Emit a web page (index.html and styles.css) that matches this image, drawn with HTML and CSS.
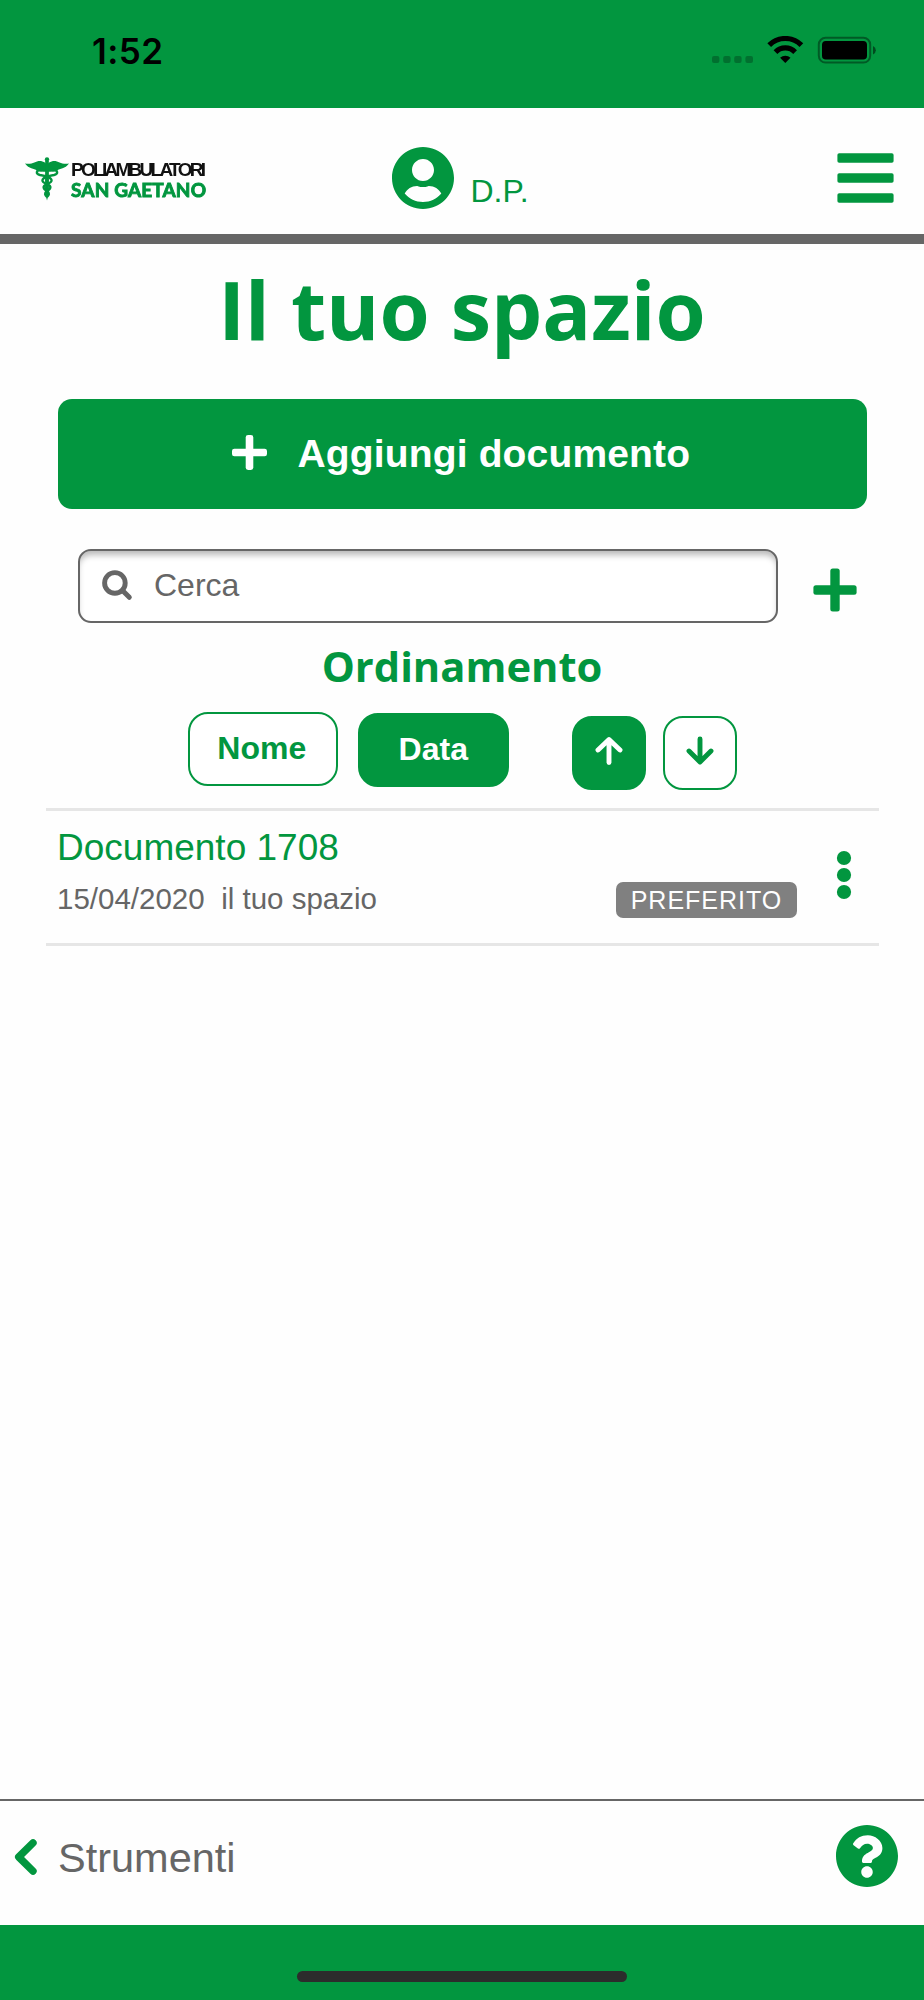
FILE: index.html
```html
<!DOCTYPE html>
<html lang="it">
<head>
<meta charset="utf-8">
<title>Il tuo spazio</title>
<link rel="stylesheet" href="styles.css">
</head>
<body>
<div class="app">
  <div class="status">
    <span class="time">1:52</span>
    <svg class="status-icons" width="166" height="30" viewBox="0 0 166 30">
      <g fill="#000" fill-opacity=".25"><rect x="0" y="20" width="7.4" height="7" rx="2"/><rect x="11.2" y="20" width="7.4" height="7" rx="2"/><rect x="22.2" y="20" width="7.4" height="7" rx="2"/><rect x="33.4" y="20" width="7.6" height="7" rx="2"/></g>
      <g fill="none" stroke="#000" stroke-width="5.200"><path d="M57.200 9.200A22.700 22.700 0 0 1 89.400 9.200"/><path d="M63.500 16.100A13.600 13.600 0 0 1 83.100 16.100"/></g>
      <path d="M73.300 27L68.100 21.800A7.400 7.400 0 0 1 78.500 21.800Z"/>
      <rect x="106.800" y="1.800" width="51.400" height="24.800" rx="6.800" fill="none" stroke="#000" stroke-opacity=".4" stroke-width="2"/>
      <rect x="110" y="5" width="45" height="18.600" rx="3.800"/>
      <path d="M161 10v8.600a4.700 4.700 0 0 0 0-8.600z" fill-opacity=".5"/>
    </svg>
  </div>
  <header class="header">
    <svg class="logo" width="190" height="50" viewBox="0 0 190 50">
      <g fill="#02963f">
        <circle cx="22" cy="2.500" r="2.200"/>
        <path d="M0 6.500C8 8 10 3.500 16 4Q20 4.500 22 7.500Q24 4.500 28 4C34 3.500 36 8 44 6.500C40 12 35 11.500 32 13.500Q27 15.500 22 14.500Q17 15.500 12 13.500C9 11.500 4 12 0 6.500Z"/>
        <path d="M20.200 4h3.600L24 36L22 43.500L20 36Z"/>
      </g>
      <g fill="none" stroke="#02963f" stroke-width="2.400"><path d="M17 13C10 13 11 17 15 18C29 20 29 25 22 27C17 29 18 32 22 34C25 36 24 38 22 40"/><path d="M27 13C34 13 33 17 29 18C15 20 15 25 22 27C27 29 26 32 22 34C19 36 20 38 22 40"/></g>
      <text class="logo-top" x="46" y="19" textLength="135" lengthAdjust="spacing">POLIAMBULATORI</text>
      <text class="logo-bottom" x="46" y="40" textLength="135" lengthAdjust="spacing">SAN GAETANO</text>
    </svg>
    <div class="user">
      <svg width="62" height="62" viewBox="0 8 496 496"><path fill="#02963f" d="M248 8C111 8 0 119 0 256s111 248 248 248 248-111 248-248S385 8 248 8zm0 96c48.600 0 88 39.400 88 88s-39.400 88-88 88-88-39.400-88-88 39.400-88 88-88zm0 344c-58.700 0-111.300-26.600-146.500-68.200 18.800-35.400 55.600-59.800 98.500-59.800 2.400 0 4.800.4 7.100 1.100 13 4.200 26.600 6.900 40.900 6.900 14.300 0 28-2.700 40.900-6.900 2.300-.7 4.700-1.100 7.100-1.100 42.900 0 79.700 24.400 98.500 59.800C359.300 421.400 306.700 448 248 448z"/></svg>
      <span class="initials">D.P.</span>
    </div>
    <svg class="burger" width="57" height="50" viewBox="0 0 57 50" fill="#02963f"><rect x=".4" y=".3" width="56.200" height="9.400" rx="1.800"/><rect x=".4" y="20.300" width="56.200" height="9.400" rx="1.800"/><rect x=".4" y="40.300" width="56.200" height="9.400" rx="1.800"/></svg>
  </header>
  <main class="main">
    <h1 class="title">Il tuo spazio</h1>
    <div class="add">
      <svg width="35" height="35" viewBox="0 0 35 35" fill="#fff"><rect x="0" y="13.700" width="35" height="7.600" rx="2.400"/><rect x="13.700" y="0" width="7.600" height="35" rx="2.400"/></svg>
      <span class="add-label">Aggiungi documento</span>
    </div>
    <div class="search-row">
      <div class="search">
        <svg width="31" height="31" viewBox="0 0 31 31" fill="none" stroke="#666"><circle cx="12.900" cy="12.900" r="10.300" stroke-width="4.900"/><path d="M20.500 20.500L27.300 27.300" stroke-width="5" stroke-linecap="round"/></svg>
        <span class="placeholder">Cerca</span>
      </div>
      <svg class="plus" width="44" height="44" viewBox="0 0 44 44" fill="#02963f"><rect x=".4" y="17.300" width="43.200" height="9.400" rx="2.500"/><rect x="17.300" y=".4" width="9.400" height="43.200" rx="2.500"/></svg>
    </div>
    <h2 class="sort-title">Ordinamento</h2>
    <div class="sort">
      <span class="chip chip-name">Nome</span>
      <span class="chip chip-date active">Data</span>
      <span class="arrow arrow-up active"><svg width="28" height="30" viewBox="0 0 28 30" fill="none" stroke="#fff" stroke-width="4.900"><path d="M14 4V26.500M3 14L14 3.500L25 14" stroke-linecap="round" stroke-linejoin="round"/></svg></span>
      <span class="arrow arrow-down"><svg width="28" height="30" viewBox="0 0 28 30" fill="none" stroke="#02963f" stroke-width="4.900"><path d="M14 25V3M3 15L14 26L25 15" stroke-linecap="round" stroke-linejoin="round"/></svg></span>
    </div>
    <div class="doc">
      <div class="doc-info">
        <div class="doc-name">Documento 1708</div>
        <div class="doc-meta"><span class="date">15/04/2020</span><span class="place">il tuo spazio</span></div>
      </div>
      <span class="badge">PREFERITO</span>
      <svg class="dots" width="16" height="50" viewBox="0 0 16 50" fill="#02963f"><circle cx="8" cy="8" r="7.100"/><circle cx="8" cy="25" r="7.100"/><circle cx="8" cy="42" r="7.100"/></svg>
    </div>
  </main>
  <footer class="footer">
    <svg class="back" width="24" height="38" viewBox="0 0 24 38" fill="none" stroke="#02963f" stroke-width="7.400"><path d="M19 4.900L4.700 19L19 33.100" stroke-linecap="round" stroke-linejoin="round"/></svg>
    <span class="tools">Strumenti</span>
    <svg class="help" width="62" height="62" viewBox="8 8 496 496"><path fill="#02963f" d="M504 256c0 136.997-111.043 248-248 248S8 392.997 8 256C8 119.083 119.043 8 256 8s248 111.083 248 248zM262.655 90c-54.497 0-89.255 22.957-116.549 63.758-3.536 5.286-2.353 12.415 2.715 16.258l34.699 26.310c5.205 3.947 12.621 3.008 16.665-2.122 17.864-22.658 30.113-35.797 57.303-35.797 20.429 0 45.698 13.148 45.698 32.958 0 14.976-12.363 22.667-32.534 33.976C247.128 238.528 216 254.941 216 296v4c0 6.627 5.373 12 12 12h56c6.627 0 12-5.373 12-12v-1.333c0-28.462 83.186-29.647 83.186-106.667 0-58.002-60.165-102-116.531-102zM256 338c-25.365 0-46 20.635-46 46 0 25.364 20.635 46 46 46s46-20.636 46-46c0-25.365-20.635-46-46-46z"/></svg>
  </footer>
  <div class="home"><div class="home-bar"></div></div>
</div>
</body>
</html>
```
FILE: styles.css
```css
* { box-sizing: border-box; }
body { margin: 0; background: #fefefe; font-family: "Liberation Sans", Arial, sans-serif; color: #666; }
svg { display: block; flex: none; }
.app { width: 924px; height: 2000px; display: flex; flex-direction: column; white-space: nowrap; overflow: hidden; }

.status { height: 108.4px; flex: none; background: #02963f; display: flex; align-items: flex-start; justify-content: space-between; padding: 35px 46px 0 92px; }
.status-icons { margin-top: 1px; }
.time { font: 600 35px/32px "Inter", sans-serif; color: #000; letter-spacing: 0.4px; }

.header { height: 135.6px; flex: none; border-bottom: 10px solid #666; display: flex; align-items: flex-start; background: #fefefe; }
.logo { margin: 48.500px 0 0 25px; filter: blur(0.5px); overflow: visible; }
.logo-top { font: 700 19px "Liberation Sans", sans-serif; fill: #111; }
.logo-bottom { font: 700 19px "Lato", sans-serif; fill: #02963f; stroke: #02963f; stroke-width: 0.9px; }
.user { display: flex; margin: 38.500px 0 0 177px; }
.initials { font-size: 32px; line-height: 32px; margin: 28px 0 0 16.500px; color: #02963f; }
.burger { margin: 44.500px 30px 0 auto; }

.main { flex: 1; display: flex; flex-direction: column; }
.title { margin: 15px 0 0; height: 100px; font: 700 81.100px/100px "Open Sans", sans-serif; color: #02963f; text-align: center; }
.add { margin: 40px 57.500px 0; height: 110.500px; border-radius: 14px; background: #02963f; display: flex; padding: 36px 0 0 174px; }
.add-label { font-size: 39px; font-weight: 700; line-height: 40px; margin: -1px 0 0 31px; color: #fff; letter-spacing: 0.15px; }
.search-row { display: flex; margin: 39.500px 0 0 78px; }
.search { width: 699.500px; height: 74px; border: 2.500px solid #666; border-radius: 13px; background: #fff; box-shadow: inset 0 6px 6px -2px rgba(0,0,0,.28); display: flex; padding: 19.500px 0 0 22px; }
.placeholder { font-size: 32px; line-height: 32px; margin: -1px 0 0 21px; }
.plus { margin: 19px 0 0 35px; }
.sort-title { margin: 13px 0 0; height: 60px; font: 700 41.700px/60px "Open Sans", sans-serif; color: #02963f; text-align: center; }
.sort { display: flex; height: 112px; padding: 16px 0 0 187.500px; color: #02963f; font-weight: 700; }
.chip { width: 150.500px; height: 74px; border: 2px solid #02963f; border-radius: 20px; font-size: 32px; line-height: 69px; text-align: center; background: #fff; }
.chip-name { padding-right: 2px; line-height: 68px; }
.chip-date { margin: 1px 0 0 20px; }
.arrow { width: 74px; height: 74px; border: 2px solid #02963f; border-radius: 20px; display: flex; justify-content: center; padding-top: 18px; margin-top: 4px; background: #fff; }
.arrow-up { margin-left: 63.500px; }
.arrow-down { margin-left: 17px; }
.active { background: #02963f; color: #fff; }
.doc { margin: 0 45.500px; height: 138px; border: solid #e6e6e6; border-width: 3px 0; display: flex; align-items: flex-start; }
.doc-info { width: 570.500px; padding: 17px 0 0 11.500px; }
.doc-name { font-size: 37px; line-height: 40px; color: #02963f; }
.doc-meta { font-size: 29.500px; line-height: 32px; margin-top: 15px; display: flex; }
.place { margin-left: 16.500px; }
.badge { width: 181px; height: 36.500px; margin-top: 71px; border-radius: 7px; background: #808080; color: #fefefe; font-size: 25px; line-height: 37px; letter-spacing: 1px; text-align: center; }
.dots { margin: 39.500px 0 0 39px; }

.footer { height: 125.500px; flex: none; border-top: 2px solid #666; display: flex; align-items: flex-start; }
.back { margin: 37px 0 0 14px; }
.tools { font-size: 41.500px; line-height: 42px; margin: 36px 0 0 20px; }
.help { margin: 24px 26px 0 auto; }
.home { height: 75.500px; flex: none; background: #02963f; display: flex; justify-content: center; padding-top: 46px; }
.home-bar { width: 330px; height: 11px; border-radius: 6px; background: #2c2c2c; }
```
